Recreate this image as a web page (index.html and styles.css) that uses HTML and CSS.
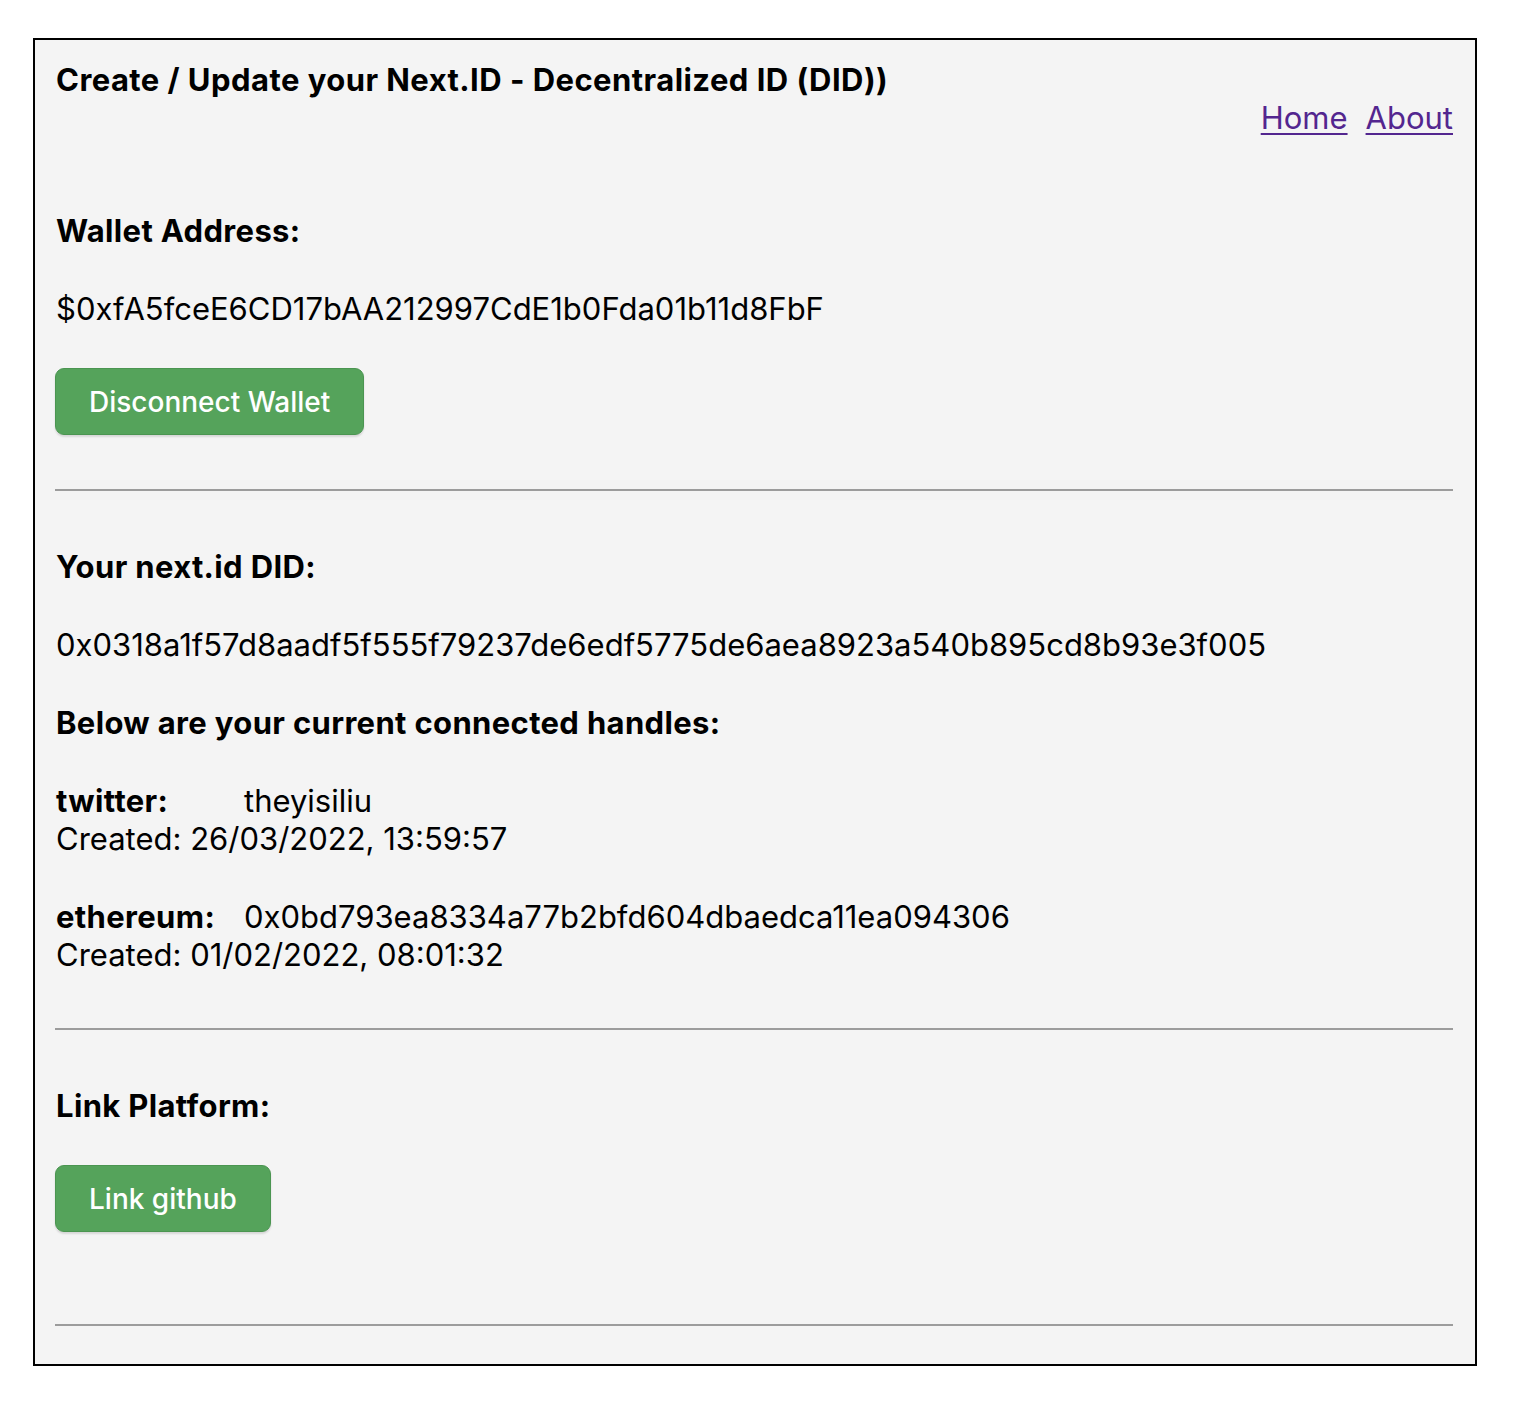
FILE: index.html
```html
<!DOCTYPE html>
<html lang="en">
<head>
<meta charset="utf-8">
<title>Next.ID DID</title>
<link rel="stylesheet" href="styles.css">
</head>
<body>
<div class="frame">
  <h1 class="title">Create / Update your Next.ID - Decentralized ID (DID))</h1>
  <nav class="nav"><a href="#">Home</a><a href="#">About</a></nav>

  <section class="section first">
    <h2 class="label">Wallet Address:</h2>
    <p class="value">$0xfA5fceE6CD17bAA212997CdE1b0Fda01b11d8FbF</p>
    <button class="btn" type="button">Disconnect Wallet</button>
  </section>

  <hr class="rule">

  <section class="section">
    <h2 class="label">Your next.id DID:</h2>
    <p class="value">0x0318a1f57d8aadf5f555f79237de6edf5775de6aea8923a540b895cd8b93e3f005</p>
    <h2 class="label">Below are your current connected handles:</h2>
    <div class="handle">
      <div class="handle-row"><span class="handle-name">twitter:</span><span>theyisiliu</span></div>
      <div>Created: 26/03/2022, 13:59:57</div>
    </div>
    <div class="handle">
      <div class="handle-row"><span class="handle-name">ethereum:</span><span>0x0bd793ea8334a77b2bfd604dbaedca11ea094306</span></div>
      <div>Created: 01/02/2022, 08:01:32</div>
    </div>
  </section>

  <hr class="rule">

  <section class="section">
    <h2 class="label">Link Platform:</h2>
    <button class="btn" type="button">Link github</button>
  </section>

  <hr class="rule last">
</div>
</body>
</html>
```

FILE: styles.css
```css
html, body {
  margin: 0;
  padding: 0;
  background: #ffffff;
}

body {
  padding: 38px 39px 40px 33px;
  font-family: Inter, "Noto Sans", "Liberation Sans", sans-serif;
  font-size: 31px;
  line-height: 38px;
  color: #000;
}

.frame {
  border: 2px solid #000;
  background: #f4f4f4;
  padding: 21px 22px 38px 21px;
}

.title {
  margin: 0;
  font-size: 31px;
  font-weight: 700;
  line-height: 38px;
  letter-spacing: 0.45px;
}

.nav {
  display: flex;
  justify-content: flex-end;
  gap: 18px;
}

.nav a {
  color: #53268f;
  text-decoration: underline;
  text-underline-offset: 4px;
  text-decoration-thickness: 2px;
}

.section {
  display: flex;
  flex-direction: column;
  align-items: flex-start;
  gap: 40px;
  padding: 57px 0 0;
}

.section.first {
  padding-top: 75px;
}

.label {
  margin: 0;
  font-size: 31px;
  font-weight: 700;
  line-height: 38px;
  letter-spacing: 0.35px;
}

.value {
  margin: 0;
}

.handle-row {
  display: flex;
}

.handle-name {
  font-weight: 700;
  letter-spacing: 0.35px;
  width: 188px;
}

.btn {
  font-family: Inter, "Noto Sans", "Liberation Sans", sans-serif;
  font-size: 28px;
  font-weight: 500;
  color: #fff;
  background: #55a35b;
  border: 1px solid #4b9551;
  border-radius: 9px;
  height: 67px;
  padding: 0 33px;
  margin-left: -1px;
  box-shadow: 0 2px 2px rgba(0, 0, 0, 0.12);
  cursor: pointer;
}

.rule {
  border: 0;
  height: 2px;
  background: #9c9c9c;
  margin: 54px 0 0 -1px;
}

.rule.last {
  margin-top: 92px;
}
```
